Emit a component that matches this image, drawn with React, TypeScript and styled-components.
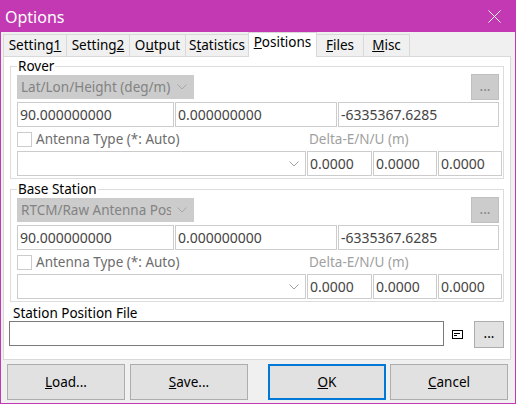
import React from "react";
import styled, { createGlobalStyle, css } from "styled-components";

const FONT = `"Noto Sans", "Open Sans", "DejaVu Sans", sans-serif`;

const GlobalStyle = createGlobalStyle`
  html, body { margin: 0; padding: 0; background: #ffffff; }
  * { box-sizing: border-box; }
`;

const Window = styled.div`
  width: 516px;
  height: 404px;
  border: 1px solid #c239b3;
  background: #f0f0f0;
  display: flex;
  flex-direction: column;
  font-family: ${FONT};
  font-size: 13.5px;
  color: #000;
  overflow: hidden;
`;

const TitleBar = styled.div`
  flex: none;
  height: 31px;
  background: #c239b3;
  display: flex;
  align-items: center;
  justify-content: space-between;
  padding-left: 4px;
`;

const Title = styled.span`
  color: #fff;
  font-size: 16px;
  line-height: 20px;
`;

const CloseButton = styled.div`
  width: 42px;
  height: 31px;
  display: flex;
  align-items: center;
  justify-content: center;
`;

const Body = styled.div`
  flex: 1;
  display: flex;
  flex-direction: column;
  padding: 0 4px 0 2px;
`;

const TabStrip = styled.div`
  height: 24px;
  display: flex;
  align-items: flex-end;
`;

const Tab = styled.div<{ $w: number; $active?: boolean; $first?: boolean }>`
  width: ${(p) => p.$w}px;
  height: 22px;
  margin-left: ${(p) => (p.$first ? 0 : -1)}px;
  border: 1px solid #d9d9d9;
  border-bottom: none;
  background: #f0f0f0;
  text-align: center;
  padding-top: 2px;
  line-height: 17px;
  white-space: nowrap;
  ${(p) =>
    p.$active &&
    css`
      height: 25px;
      margin-bottom: -1px;
      background: #fff;
      position: relative;
      z-index: 1;
      padding-top: 1px;
    `}
`;

const TabPage = styled.div`
  height: 304px;
  border: 1px solid #d9d9d9;
  background: #fff;
  padding: 1px 6px 0 6px;
  display: flex;
  flex-direction: column;
`;

const Group = styled.fieldset<{ $gap?: number }>`
  margin: ${(p) => p.$gap ?? 0}px 0 0 0;
  border: 1px solid #dcdcdc;
  padding: 0 1px 2px 6px;
  min-width: 0;
`;

const Legend = styled.legend`
  padding: 0 1px;
  line-height: 16px;
  font-size: 13.5px;
`;

const ComboRow = styled.div`
  height: 26px;
  margin-right: 3px;
  display: flex;
  align-items: center;
  justify-content: space-between;
`;

const Combo = styled.div<{ $w: number; $disabled?: boolean }>`
  width: ${(p) => p.$w}px;
  height: ${(p) => (p.$disabled ? 24 : 25)}px;
  border: 1px solid #cccccc;
  background: ${(p) => (p.$disabled ? "#cccccc" : "#ffffff")};
  color: #838383;
  display: flex;
  align-items: center;
  padding: 0 6px 0 3px;
  gap: 6px;
`;

const ComboText = styled.span`
  flex: 1;
  overflow: hidden;
  white-space: nowrap;
  line-height: 17px;
`;

const EllipsisButton = styled.div<{ $disabled?: boolean }>`
  width: ${(p) => (p.$disabled ? 28 : 30)}px;
  height: ${(p) => (p.$disabled ? 26 : 27)}px;
  border: 1px solid ${(p) => (p.$disabled ? "#bfbfbf" : "#adadad")};
  background: ${(p) => (p.$disabled ? "#cccccc" : "#e1e1e1")};
  color: ${(p) => (p.$disabled ? "#838383" : "#000")};
  display: flex;
  align-items: center;
  justify-content: center;
  line-height: 17px;
  padding-bottom: 2px;
`;

const CoordRow = styled.div`
  margin-top: 2px;
  display: grid;
  grid-template-columns: 157px 162px 161px;
  column-gap: 1px;
`;

const TextBox = styled.input<{ $strong?: boolean }>`
  height: 25px;
  width: 100%;
  margin: 0;
  border: 1px solid ${(p) => (p.$strong ? "#7a7a7a" : "#cccccc")};
  background: #fff;
  color: #444444;
  font-family: ${FONT};
  font-size: 14px;
  padding: 0 2px;
  outline: none;
`;

const AntennaRow = styled.div`
  height: 24px;
  display: grid;
  grid-template-columns: 290px 1fr;
  align-items: start;
`;

const CheckLabel = styled.label`
  display: flex;
  align-items: center;
  gap: 4px;
  color: #6d6d6d;
  padding-top: 4px;
  line-height: 17px;
`;

const CheckBox = styled.span`
  width: 15px;
  height: 15px;
  border: 1px solid #cccccc;
  background: #fff;
  flex: none;
`;

const DeltaLabel = styled.span`
  color: #a0a0a0;
  padding: 4px 0 0 2px;
  line-height: 17px;
`;

const DeltaRow = styled.div`
  display: grid;
  grid-template-columns: 289px 65px 64px 64px;
  column-gap: 1px;
`;

const FileLabel = styled.div`
  margin: 3px 0 0 3px;
  line-height: 16px;
`;

const FileRow = styled.div`
  display: flex;
  align-items: flex-start;
  margin-left: -1px;
`;

const FileBox = styled(TextBox)`
  width: 435px;
`;

const NoteIcon = styled.svg`
  margin: 9px 0 0 8px;
  flex: none;
`;

const Spacer = styled.div`
  flex: 1;
`;

const ButtonBar = styled.div`
  margin-top: 4px;
  padding-left: 4px;
  display: flex;
`;

const DialogButton = styled.div<{ $default?: boolean; $gap: number }>`
  width: 118px;
  height: 36px;
  margin-left: ${(p) => p.$gap}px;
  background: #e1e1e1;
  border: ${(p) => (p.$default ? "2px solid #0078d7" : "1px solid #adadad")};
  display: flex;
  align-items: center;
  justify-content: center;
  font-size: 13.5px;
  line-height: 17px;
`;

const Chevron = ({ color }: { color: string }) => (
  <svg width="10" height="6" viewBox="0 0 10 6" style={{ flex: "none" }}>
    <polyline points="0.5,0.5 5,5 9.5,0.5" fill="none" stroke={color} strokeWidth="1" />
  </svg>
);

const tabs = [
  { w: 64, label: <>Setting<u>1</u></> },
  { w: 64, label: <>Setting<u>2</u></> },
  { w: 57, label: <>O<u>u</u>tput</> },
  { w: 64, label: <>S<u>t</u>atistics</> },
  { w: 69, label: <><u>P</u>ositions</>, active: true },
  { w: 48, label: <><u>F</u>iles</> },
  { w: 47, label: <><u>M</u>isc</> },
];

const PositionGroup = ({ title, mode, gap }: { title: string; mode: string; gap?: number }) => (
  <Group $gap={gap}>
    <Legend>{title}</Legend>
    <ComboRow>
      <Combo $w={177} $disabled>
        <ComboText>{mode}</ComboText>
        <Chevron color="#a6a6a6" />
      </Combo>
      <EllipsisButton $disabled>...</EllipsisButton>
    </ComboRow>
    <CoordRow>
      <TextBox readOnly value="90.000000000" />
      <TextBox readOnly value="0.000000000" />
      <TextBox readOnly value="-6335367.6285" />
    </CoordRow>
    <AntennaRow>
      <CheckLabel>
        <CheckBox />
        Antenna Type (*: Auto)
      </CheckLabel>
      <DeltaLabel>Delta-E/N/U (m)</DeltaLabel>
    </AntennaRow>
    <DeltaRow>
      <Combo $w={289}>
        <ComboText />
        <Chevron color="#a0a0a0" />
      </Combo>
      <TextBox readOnly value="0.0000" />
      <TextBox readOnly value="0.0000" />
      <TextBox readOnly value="0.0000" />
    </DeltaRow>
  </Group>
);

export default function App() {
  return (
    <>
      <GlobalStyle />
      <Window>
        <TitleBar>
          <Title>Options</Title>
          <CloseButton>
            <svg width="13" height="13" viewBox="0 0 13 13">
              <path d="M0.5 0.5 L12.5 12.5 M12.5 0.5 L0.5 12.5" stroke="#fff" strokeWidth="1" fill="none" />
            </svg>
          </CloseButton>
        </TitleBar>
        <Body>
          <TabStrip>
            {tabs.map((t, i) => (
              <Tab key={i} $w={t.w} $active={t.active} $first={i === 0}>
                {t.label}
              </Tab>
            ))}
          </TabStrip>
          <TabPage>
            <PositionGroup title="Rover" mode="Lat/Lon/Height (deg/m)" />
            <PositionGroup title="Base Station" mode="RTCM/Raw Antenna Position" gap={2} />
            <FileLabel>Station Position File</FileLabel>
            <FileRow>
              <FileBox $strong readOnly value="" />
              <NoteIcon width="11" height="9" viewBox="0 0 11 9">
                <rect x="0.5" y="0.5" width="10" height="8" fill="#fff" stroke="#000" />
                <path d="M2 3.5 H8 M2 5.5 H5" stroke="#000" strokeWidth="1" />
              </NoteIcon>
              <Spacer />
              <EllipsisButton>...</EllipsisButton>
            </FileRow>
          </TabPage>
          <ButtonBar>
            <DialogButton $gap={0}><span><u>L</u>oad...</span></DialogButton>
            <DialogButton $gap={5}><span><u>S</u>ave...</span></DialogButton>
            <DialogButton $gap={20} $default><span><u>O</u>K</span></DialogButton>
            <DialogButton $gap={4}><span><u>C</u>ancel</span></DialogButton>
          </ButtonBar>
        </Body>
      </Window>
    </>
  );
}
